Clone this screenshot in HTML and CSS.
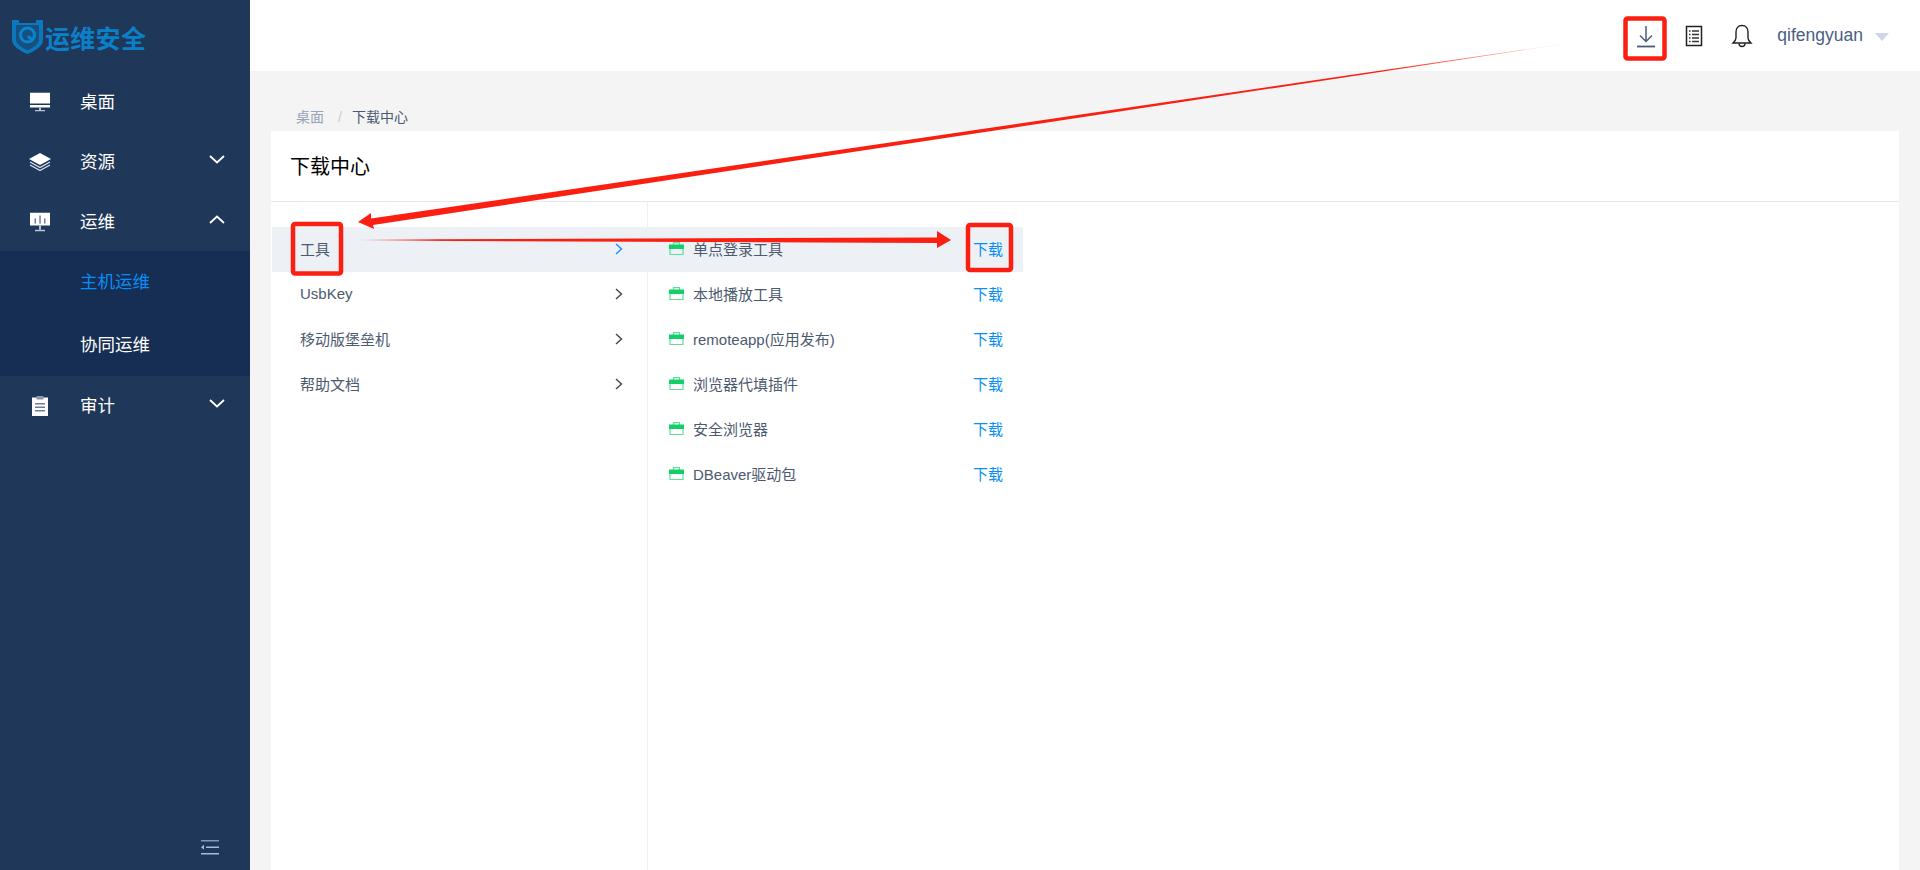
FILE: index.html
```html
<!DOCTYPE html>
<html lang="en">

<head>
    <meta charset="UTF-8">
    <meta name="viewport" content="width=device-width, initial-scale=1.0">
    <title>下载中心</title>
    <link rel="stylesheet" href="styles.css">
</head>

<body>
    <div class="app">
        <!-- 侧边栏 -->
        <aside class="sidebar">
            <div class="logo">
                <svg class="logo-mark" width="31" height="34" viewBox="0 0 31 34">
                    <path d="M0 0h7v3h17V0h7v20c0 6-8 11-15.500 14C8 31 0 26 0 20z" fill="#0b78bd"/>
                    <path d="M4 5h23v14.500c0 4-5 8-11.500 11C9 27.500 4 23.500 4 19.500z" fill="#17507f"/>
                    <circle cx="15.500" cy="15" r="7" fill="none" stroke="#0b84cc" stroke-width="3"/>
                    <path d="M16 16l5 5" stroke="#0b84cc" stroke-width="3"/>
                </svg>
                <span class="logo-text">运维安全</span>
            </div>
            <a class="menu-item">
                <svg class="menu-icon" width="20" height="19" viewBox="0 0 20 19">
                    <path d="M0 0h20v11H0z" fill="#fff"/>
                    <path d="M0 12.500h20V15H0z" fill="#fff"/>
                    <path d="M9 15h2v2.500H9zM5 17.500h10V19H5z" fill="#b9c3d2"/>
                </svg>
                <span>桌面</span>
            </a>
            <a class="menu-item">
                <svg class="menu-icon" width="22" height="18" viewBox="0 0 22 18">
                    <path d="M11 0l11 6-11 6L0 6z" fill="#fff"/>
                    <path d="M1 9l10 5.500L21 9M1 12l10 5.500L21 12" fill="none" stroke="#dfe4ec" stroke-width="1.200"/>
                </svg>
                <span>资源</span>
                <svg class="menu-arrow" width="16" height="9" viewBox="0 0 16 9"><path d="M1 1l7 6.500L15 1" fill="none" stroke="#fff" stroke-width="1.800"/></svg>
            </a>
            <a class="menu-item menu-item-open">
                <svg class="menu-icon" width="20" height="19" viewBox="0 0 20 19">
                    <path d="M0 0h20v13H0z" fill="#fff"/>
                    <path d="M4.500 6h1.500v5H4.500zM9.300 3h1.500v8H9.300zM14 6h1.500v5H14z" fill="#6f7f97"/>
                    <path d="M9 13h2v4H9zM5 17.300h10V19H5z" fill="#b9c3d2"/>
                </svg>
                <span>运维</span>
                <svg class="menu-arrow" width="16" height="9" viewBox="0 0 16 9"><path d="M1 8l7-6.500L15 8" fill="none" stroke="#fff" stroke-width="1.800"/></svg>
            </a>
            <div class="submenu">
                <a class="submenu-item submenu-item-active">主机运维</a>
                <a class="submenu-item">协同运维</a>
            </div>
            <a class="menu-item">
                <svg class="menu-icon" width="16" height="20" viewBox="0 0 16 20">
                    <path d="M0 1.500h16V20H0z" fill="#fff"/>
                    <path d="M4.500 0h7v3.500h-7z" fill="#8a97ac"/>
                    <path d="M3 7h10v1.500H3zM3 10.500h10V12H3zM3 14h10v1.500H3z" fill="#6f7f97"/>
                </svg>
                <span>审计</span>
                <svg class="menu-arrow" width="16" height="9" viewBox="0 0 16 9"><path d="M1 1l7 6.500L15 1" fill="none" stroke="#fff" stroke-width="1.800"/></svg>
            </a>
            <div class="sidebar-foot">
                <svg width="18" height="15" viewBox="0 0 18 15">
                    <path d="M0 0h18v1.500H0z" fill="#8296b5"/>
                    <path d="M5 6.500h13V8H5z" fill="#a9bbd6"/>
                    <path d="M0 7.200l3-2.500v5z" fill="#a9bbd6"/>
                    <path d="M0 13h18v1.500H0z" fill="#a9bbd6"/>
                </svg>
            </div>
        </aside>

        <div class="main">
            <!-- 顶栏 -->
            <header class="topbar">
                <svg class="top-icon" width="24" height="24" viewBox="0 0 24 24">
                    <path d="M12 2v15M6 11.500l6 6 6-6" fill="none" stroke="#4a5d78" stroke-width="1.500"/>
                    <path d="M3 22.500h18" stroke="#4a5d78" stroke-width="1.800"/>
                </svg>
                <svg class="top-icon" width="24" height="24" viewBox="0 0 24 24">
                    <path d="M4.500 2.500h15v19h-15z" fill="none" stroke="#222" stroke-width="1.500"/>
                    <path d="M7 7h1.500M10 7h7M7 10.500h1.500M10 10.500h7M7 14h1.500M10 14h7M7 17.500h1.500M10 17.500h7" stroke="#333" stroke-width="1.300"/>
                </svg>
                <svg class="top-icon" width="24" height="24" viewBox="0 0 24 24">
                    <path d="M12 1.500c-4 0-6 3-6 6.500v6c0 2-1.500 3.500-3 5h18c-1.500-1.500-3-3-3-5V8c0-3.500-2-6.500-6-6.500z" fill="none" stroke="#222" stroke-width="1.400"/>
                    <path d="M9 19.500c0 4 6 4 6 0" fill="none" stroke="#222" stroke-width="1.400"/>
                </svg>
                <span class="user-name">qifengyuan</span>
                <span class="user-caret"></span>
            </header>

            <div class="content">
                <div class="breadcrumb">
                    <span class="crumb-link">桌面</span>
                    <span class="crumb-sep">/</span>
                    <span class="crumb-now">下载中心</span>
                </div>
                <section class="card">
                    <h1 class="card-title">下载中心</h1>
                    <div class="card-body">
                        <ul class="category-list">
                            <li class="category category-active"><span>工具</span><svg width="8" height="12" viewBox="0 0 8 12"><path d="M1 1l5.500 5L1 11" fill="none" stroke="#1890ff" stroke-width="1.400"/></svg></li>
                            <li class="category"><span>UsbKey</span><svg width="8" height="12" viewBox="0 0 8 12"><path d="M1 1l5.500 5L1 11" fill="none" stroke="#444" stroke-width="1.400"/></svg></li>
                            <li class="category"><span>移动版堡垒机</span><svg width="8" height="12" viewBox="0 0 8 12"><path d="M1 1l5.500 5L1 11" fill="none" stroke="#444" stroke-width="1.400"/></svg></li>
                            <li class="category"><span>帮助文档</span><svg width="8" height="12" viewBox="0 0 8 12"><path d="M1 1l5.500 5L1 11" fill="none" stroke="#444" stroke-width="1.400"/></svg></li>
                        </ul>
                        <ul class="file-list">
                            <li class="file file-active">
                                <svg class="file-icon" width="15" height="13" viewBox="0 0 15 13"><path d="M4.500 3V.7h6V3M1 7v5.500h13V7" fill="none" stroke="#5fe09a" stroke-width="1.200"/><path d="M0 2.500h15V7H0z" fill="#13cf68"/></svg>
                                <span class="file-name">单点登录工具</span><a class="file-link">下载</a>
                            </li>
                            <li class="file">
                                <svg class="file-icon" width="15" height="13" viewBox="0 0 15 13"><path d="M4.500 3V.7h6V3M1 7v5.500h13V7" fill="none" stroke="#5fe09a" stroke-width="1.200"/><path d="M0 2.500h15V7H0z" fill="#13cf68"/></svg>
                                <span class="file-name">本地播放工具</span><a class="file-link">下载</a>
                            </li>
                            <li class="file">
                                <svg class="file-icon" width="15" height="13" viewBox="0 0 15 13"><path d="M4.500 3V.7h6V3M1 7v5.500h13V7" fill="none" stroke="#5fe09a" stroke-width="1.200"/><path d="M0 2.500h15V7H0z" fill="#13cf68"/></svg>
                                <span class="file-name">remoteapp(应用发布)</span><a class="file-link">下载</a>
                            </li>
                            <li class="file">
                                <svg class="file-icon" width="15" height="13" viewBox="0 0 15 13"><path d="M4.500 3V.7h6V3M1 7v5.500h13V7" fill="none" stroke="#5fe09a" stroke-width="1.200"/><path d="M0 2.500h15V7H0z" fill="#13cf68"/></svg>
                                <span class="file-name">浏览器代填插件</span><a class="file-link">下载</a>
                            </li>
                            <li class="file">
                                <svg class="file-icon" width="15" height="13" viewBox="0 0 15 13"><path d="M4.500 3V.7h6V3M1 7v5.500h13V7" fill="none" stroke="#5fe09a" stroke-width="1.200"/><path d="M0 2.500h15V7H0z" fill="#13cf68"/></svg>
                                <span class="file-name">安全浏览器</span><a class="file-link">下载</a>
                            </li>
                            <li class="file">
                                <svg class="file-icon" width="15" height="13" viewBox="0 0 15 13"><path d="M4.500 3V.7h6V3M1 7v5.500h13V7" fill="none" stroke="#5fe09a" stroke-width="1.200"/><path d="M0 2.500h15V7H0z" fill="#13cf68"/></svg>
                                <span class="file-name">DBeaver驱动包</span><a class="file-link">下载</a>
                            </li>
                        </ul>
                    </div>
                </section>
            </div>
        </div>
    </div>

    <!-- 截图上的红色标注 -->
    <svg class="marks" width="1920" height="870" viewBox="0 0 1920 870">
        <defs>
            <linearGradient id="fadeLong" gradientUnits="userSpaceOnUse" x1="1600" y1="0" x2="1380" y2="0">
                <stop offset="0" stop-color="#fb1f12" stop-opacity="0"/>
                <stop offset="1" stop-color="#fb1f12"/>
            </linearGradient>
            <linearGradient id="fadeShort" gradientUnits="userSpaceOnUse" x1="358" y1="0" x2="440" y2="0">
                <stop offset="0" stop-color="#fb1f12" stop-opacity="0"/>
                <stop offset="1" stop-color="#fb1f12"/>
            </linearGradient>
        </defs>
        <rect x="1625.500" y="18.500" width="39" height="40" rx="2" fill="none" stroke="#fb1f12" stroke-width="4.500"/>
        <rect x="293" y="224" width="48" height="49.500" rx="2" fill="none" stroke="#fb1f12" stroke-width="4.500"/>
        <rect x="968" y="225" width="43" height="45" rx="2" fill="none" stroke="#fb1f12" stroke-width="4.500"/>
        <polygon points="1600,38.500 371,218.500 371,213 358,222 374,229 373,225" fill="url(#fadeLong)"/>
        <polygon points="358,239.500 937,237.500 937,231 951,240 937,248 937,243 358,240.500" fill="url(#fadeShort)"/>
    </svg>
</body>

</html>
```

FILE: styles.css
```css
* {
    box-sizing: border-box;
}

body {
    margin: 0;
    height: 870px;
    overflow: hidden;
    font-family: "Liberation Sans", "Noto Sans CJK SC", sans-serif;
    background-color: #f4f4f4;
    position: relative;
}

ul {
    list-style: none;
    margin: 0;
    padding: 0;
}

.app {
    display: flex;
    height: 100%;
}

/* 侧边栏 */
.sidebar {
    width: 250px;
    flex-shrink: 0;
    display: flex;
    flex-direction: column;
    background-color: #1f3859;
    color: #fff;
}

.logo {
    height: 72px;
    display: flex;
    align-items: center;
    gap: 2px;
    padding: 1px 0 0 12px;
}

.logo-text {
    font-size: 25px;
    font-weight: 700;
    letter-spacing: 0.3px;
    color: #0b80c8;
}

.menu-item {
    height: 60px;
    display: flex;
    align-items: center;
    font-size: 17.5px;
    position: relative;
    padding: 0 0 3px 80px;
}

.menu-item-open {
    height: 59px;
}

.menu-icon {
    position: absolute;
    left: 40px;
    top: 50%;
    transform: translate(-50%, -50%);
}

.menu-arrow {
    position: absolute;
    right: 25px;
    top: 23px;
}

.submenu {
    background-color: #162e54;
}

.submenu-item {
    height: 62.5px;
    display: flex;
    align-items: center;
    padding: 0 0 3px 80px;
    font-size: 17.5px;
}

.submenu-item-active {
    color: #0a8cf5;
}

.sidebar-foot {
    margin-top: auto;
    display: flex;
    justify-content: flex-end;
    padding: 0 31px 15px 0;
}

/* 顶栏 */
.main {
    flex: 1;
    min-width: 0;
    display: flex;
    flex-direction: column;
}

.topbar {
    height: 71px;
    flex-shrink: 0;
    display: flex;
    align-items: center;
    justify-content: flex-end;
    gap: 24px;
    padding-right: 31px;
    background-color: #fff;
}

.user-name {
    margin-left: -1px;
    font-size: 17.5px;
    color: #4a6080;
}

.user-caret {
    margin-left: -12px;
    width: 0;
    height: 0;
    border-left: 7px solid transparent;
    border-right: 7px solid transparent;
    border-top: 8px solid #cdd6e4;
    position: relative;
    top: 1px;
}

/* 内容区 */
.content {
    flex: 1;
    min-height: 0;
    display: flex;
    flex-direction: column;
    padding: 0 21px 0 21px;
}

.breadcrumb {
    height: 60px;
    flex-shrink: 0;
    display: flex;
    align-items: flex-end;
    padding: 0 0 4px 25px;
    font-size: 14px;
    line-height: 20px;
}

.crumb-link {
    color: #97a3b6;
}

.crumb-sep {
    margin: 0 10px 0 14px;
    color: #c5ccd8;
}

.crumb-now {
    color: #4a5a70;
}

.card {
    flex: 1;
    min-height: 0;
    display: flex;
    flex-direction: column;
    background-color: #fff;
}

.card-title {
    height: 71px;
    flex-shrink: 0;
    margin: 0;
    display: flex;
    align-items: center;
    padding: 0 0 2px 19px;
    font-size: 20px;
    font-weight: 400;
    color: #000;
    border-bottom: 1px solid #e6e8eb;
}

.card-body {
    flex: 1;
    display: flex;
    padding: 25px 0 0 1px;
}

/* 下载列表 */
.category-list {
    width: 376px;
    border-right: 1px solid #eef0f3;
    margin-top: -25px;
    padding-top: 25px;
}

.category,
.file {
    height: 45px;
    display: flex;
    align-items: center;
    font-size: 15px;
    color: #4c5a6e;
    padding-bottom: 2px;
}

.category {
    justify-content: space-between;
    padding-left: 28px;
    padding-right: 24px;
}

.category-active,
.file-active {
    background-color: #edf0f5;
}

.file-list {
    width: 375px;
}

.file {
    padding-left: 21px;
    padding-right: 20px;
}

.file-icon {
    margin: -1px 9px 0 0;
    flex-shrink: 0;
}

.file-name {
    flex: 1;
}

.file-link {
    color: #0a90f5;
}

/* 标注层盖在页面上方 */
.marks {
    position: absolute;
    left: 0;
    top: 0;
    pointer-events: none;
}
```
